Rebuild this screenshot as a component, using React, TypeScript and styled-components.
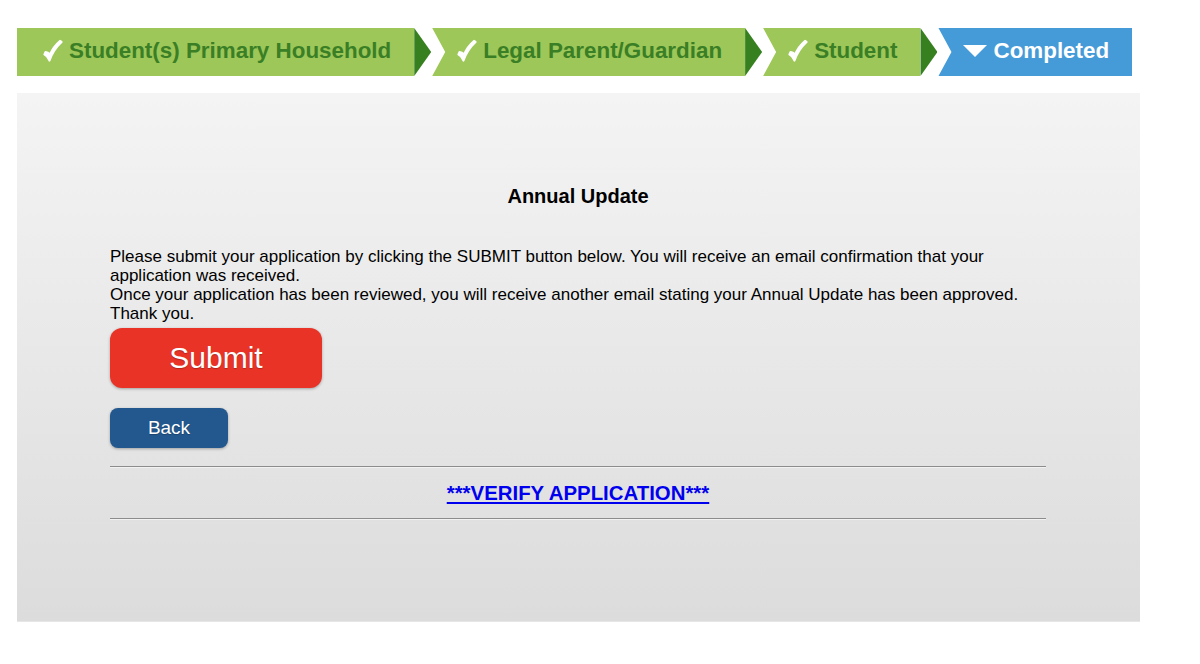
import React from "react";
import styled, { createGlobalStyle } from "styled-components";

const GlobalStyle = createGlobalStyle`
  html, body { margin: 0; padding: 0; background: #ffffff; }
  body { font-family: "Liberation Sans", Arial, sans-serif; color: #000; }
`;

const Page = styled.div`
  padding: 28px 0 0 17px;
  width: 1123px;
`;

const Steps = styled.nav`
  display: flex;
  align-items: stretch;
  height: 48px;
`;

const Step = styled.div<{ $notch: boolean; $active?: boolean }>`
  display: flex;
  align-items: center;
  gap: 6px;
  height: 48px;
  box-sizing: border-box;
  padding: 0 23px 2px ${(p) => (p.$notch ? 25 : 26)}px;
  margin-left: ${(p) => (p.$notch ? 1 : 0)}px;
  background: ${(p) => (p.$active ? "#459ad8" : "#9dc758")};
  color: ${(p) => (p.$active ? "#ffffff" : "#3a7f25")};
  font-size: 22.4px;
  font-weight: bold;
  white-space: nowrap;
  clip-path: ${(p) =>
    p.$notch
      ? "polygon(0 0, 100% 0, 100% 100%, 0 100%, 13px 50%)"
      : "none"};
`;

const Arrow = styled.div`
  width: 17px;
  height: 48px;
  background: #37801f;
  clip-path: polygon(0 0, 100% 50%, 0 100%);
`;

const Check = () => (
  <svg width="20" height="24" viewBox="0 0 20 24" aria-hidden="true">
    <path
      d="M1.5 15.5 Q4 16.5 6.5 21.5 Q10 11 18.5 3 L17 2 Q10.5 7.5 7 15.5 Q5 13.5 2.5 13.2 Z"
      fill="#ffffff"
      stroke="#ffffff"
      strokeWidth="2.2"
      strokeLinejoin="round"
    />
  </svg>
);

const Down = () => (
  <svg width="24" height="14" viewBox="0 0 24 14" aria-hidden="true">
    <polygon points="0,1 24,1 12,13" fill="#ffffff" />
  </svg>
);

const Panel = styled.main`
  margin-top: 17px;
  height: 529px;
  box-sizing: border-box;
  background: linear-gradient(#f4f4f4, #dcdcdc);
  border-bottom: 1px solid #e6e6e6;
  padding: 92px 94px 0 93px;
`;

const Title = styled.h2`
  margin: 0;
  text-align: center;
  font-size: 20px;
  line-height: 23px;
  font-weight: bold;
`;

const Message = styled.p`
  margin: 39px 0 0;
  font-size: 17px;
  line-height: 19px;
`;

const Button = styled.button<{ $variant: "submit" | "back" }>`
  display: block;
  border: none;
  cursor: pointer;
  color: #ffffff;
  font-family: "Liberation Sans", Arial, sans-serif;
  width: ${(p) => (p.$variant === "submit" ? 212 : 118)}px;
  height: ${(p) => (p.$variant === "submit" ? 60 : 40)}px;
  border-radius: ${(p) => (p.$variant === "submit" ? 12 : 8)}px;
  font-size: ${(p) => (p.$variant === "submit" ? 30 : 19)}px;
  background: ${(p) => (p.$variant === "submit" ? "#e93326" : "#23588e")};
  margin-top: ${(p) => (p.$variant === "submit" ? 5 : 20)}px;
  box-shadow: 0 1px 3px rgba(0, 0, 0, 0.3);
  text-shadow: 0 1px 1px rgba(0, 0, 0, 0.25);
  padding: 0;
`;

const Rule = styled.hr`
  margin: 0;
  border: none;
  border-top: 1px solid #8c8c8c;
  border-bottom: 1px solid #f2f2f2;
  height: 0;
`;

const VerifyRow = styled.div`
  display: flex;
  justify-content: center;
  align-items: center;
  height: 50px;
`;

const VerifyLink = styled.a`
  color: #0000ee;
  font-size: 20.4px;
  font-weight: bold;
  text-decoration: underline;
  text-underline-offset: 2px;
`;

const Divider = styled.div`
  margin-top: 18px;
`;

export default function App() {
  return (
    <>
      <GlobalStyle />
      <Page>
        <Steps>
          <Step $notch={false}>
            <Check />
            Student(s) Primary Household
          </Step>
          <Arrow />
          <Step $notch>
            <Check />
            Legal Parent/Guardian
          </Step>
          <Arrow />
          <Step $notch>
            <Check />
            Student
          </Step>
          <Arrow />
          <Step $notch $active>
            <Down />
            Completed
          </Step>
        </Steps>
        <Panel>
          <Title>Annual Update</Title>
          <Message>
            Please submit your application by clicking the SUBMIT button below. You will receive an
            email confirmation that your application was received.
            <br />
            Once your application has been reviewed, you will receive another email stating your
            Annual Update has been approved.
            <br />
            Thank you.
          </Message>
          <Button $variant="submit">Submit</Button>
          <Button $variant="back">Back</Button>
          <Divider>
            <Rule />
            <VerifyRow>
              <VerifyLink href="#">***VERIFY APPLICATION***</VerifyLink>
            </VerifyRow>
            <Rule />
          </Divider>
        </Panel>
      </Page>
    </>
  );
}
